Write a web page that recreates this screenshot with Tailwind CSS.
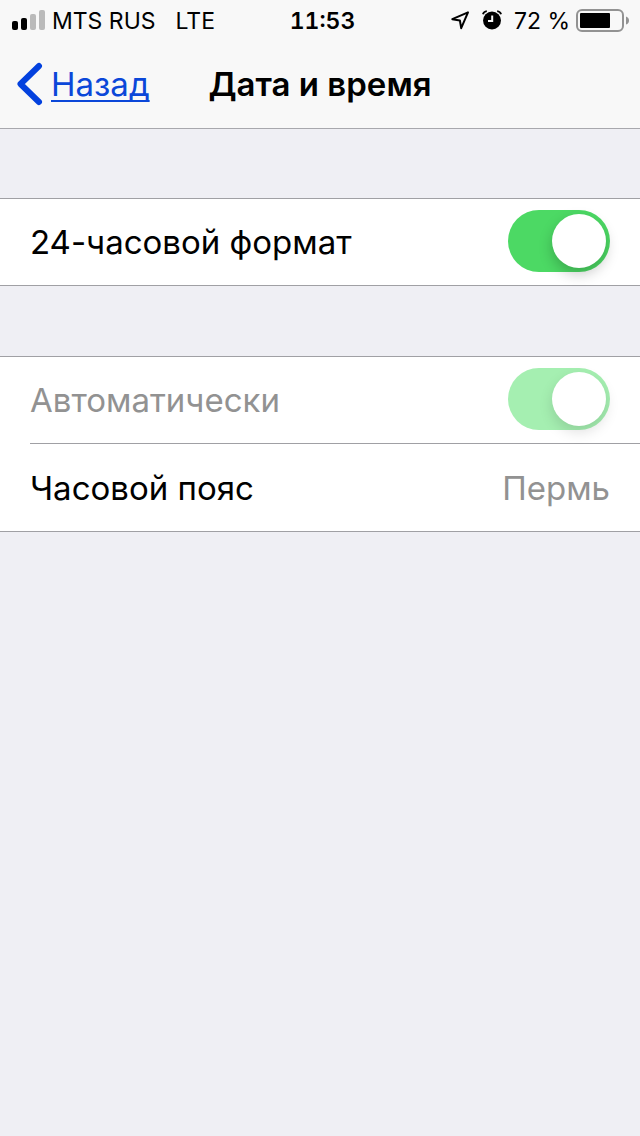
<!DOCTYPE html>
<html lang="ru">
<head>
<meta charset="utf-8">
<meta name="viewport" content="width=device-width, initial-scale=1">
<title>Дата и время</title>
<script src="https://cdn.jsdelivr.net/npm/@tailwindcss/browser@4"></script>
</head>
<body class="min-h-screen bg-[#efeff4] font-['Inter',sans-serif] text-[33px] leading-10 text-black">
<header class="border-b border-[#a8a8ad] bg-[#f8f8f8]">
  <div class="grid h-10 grid-cols-[1fr_auto_1fr] items-center pr-[11px] pl-3 text-[23px] leading-7">
    <div class="flex items-center">
      <svg class="h-5 w-[33px]" viewBox="0 0 33 20" aria-hidden="true">
        <rect x="0" y="11" width="6" height="9" rx="2"/>
        <rect x="9" y="8" width="6" height="12" rx="2"/>
        <rect x="18" y="4" width="6" height="16" rx="2" fill="#bababa"/>
        <rect x="27" y="0" width="6" height="20" rx="2" fill="#bababa"/>
      </svg>
      <span class="ml-[7px] pt-0.5">MTS RUS</span>
      <span class="ml-5 pt-0.5">LTE</span>
    </div>
    <time class="pt-0.5 pl-1 font-semibold tabular-nums">11:53</time>
    <div class="flex items-center justify-end">
      <svg class="h-5 w-5" viewBox="0 0 20 20" fill="none" stroke="#000" stroke-width="2" stroke-linejoin="round" aria-hidden="true">
        <path d="M18 2.3 2.3 9.2 9.9 10.5 11.2 18.2Z"/>
      </svg>
      <svg class="ml-3 h-5 w-5" viewBox="0 0 20 20" aria-hidden="true">
        <circle cx="10" cy="10.500" r="9"/>
        <path d="M10.2 5.500v5.600H6" fill="none" stroke="#f8f8f8" stroke-width="2"/>
        <path d="M.9 4.200Q1.800 1.600 4.800 1.200M15.200 1.200Q18.200 1.600 19.100 4.200" fill="none" stroke="#000" stroke-width="1.800"/>
      </svg>
      <span class="ml-3 pt-0.5">72 %</span>
      <svg class="ml-[6px] h-6 w-[53px]" viewBox="0 0 53 24" aria-hidden="true">
        <rect x="1" y="2" width="46" height="21" rx="5" fill="none" stroke="#929292" stroke-width="2"/>
        <rect x="4" y="5" width="30" height="15" rx="1"/>
        <path d="M50 8.500Q53 9.500 53 12.500T50 16.500Z" fill="#929292"/>
      </svg>
    </div>
  </div>
  <nav class="grid h-[88px] grid-cols-[1fr_auto_1fr] items-center px-4">
    <a href="#" class="flex items-center gap-2 text-[#0b47d9]">
      <svg class="h-11 w-[27px]" viewBox="0 0 27 44" fill="none" stroke="#0341de" stroke-width="6" stroke-linecap="round" stroke-linejoin="round" aria-hidden="true">
        <path d="M23 4 4.500 22 23 40"/>
      </svg>
      <span class="underline decoration-2 underline-offset-4 [text-decoration-skip-ink:none]">Назад</span>
    </a>
    <h1 class="font-semibold">Дата и время</h1>
  </nav>
</header>
<main class="flex flex-col gap-[70px] pt-[69px]">
  <section class="border-y border-[#a0a0a4] bg-white">
    <div class="flex items-center justify-between px-[30px] pt-[11px] pb-[13px]">
      <label for="format24" class="pt-0.5">24-часовой формат</label>
      <div class="relative h-[62px] w-[102px]">
        <input id="format24" type="checkbox" role="switch" checked class="peer block h-full w-full appearance-none rounded-full bg-[#e5e5ea] checked:bg-[#4cd964]">
        <span class="pointer-events-none absolute top-1 left-1 size-[54px] rounded-full bg-white shadow-[0_6px_14px_rgba(0,0,0,0.22)] peer-checked:left-11"></span>
      </div>
    </div>
  </section>
  <section class="border-y border-[#a0a0a4] bg-white">
    <div class="flex items-center justify-between px-[30px] pt-[11px] pb-[13px]">
      <label for="auto" class="pt-0.5 text-[#929292]">Автоматически</label>
      <div class="relative h-[62px] w-[102px]">
        <input id="auto" type="checkbox" role="switch" checked disabled class="peer block h-full w-full appearance-none rounded-full bg-[#e5e5ea] checked:bg-[#a5efb1]">
        <span class="pointer-events-none absolute top-1 left-1 size-[54px] rounded-full bg-white shadow-[0_6px_14px_rgba(0,0,0,0.13)] peer-checked:left-11"></span>
      </div>
    </div>
    <div class="ml-[30px] flex h-22 items-center justify-between border-t border-[#a0a0a4] pr-[30px]">
      <span>Часовой пояс</span>
      <span class="text-[#929292]">Пермь</span>
    </div>
  </section>
</main>
</body>
</html>
